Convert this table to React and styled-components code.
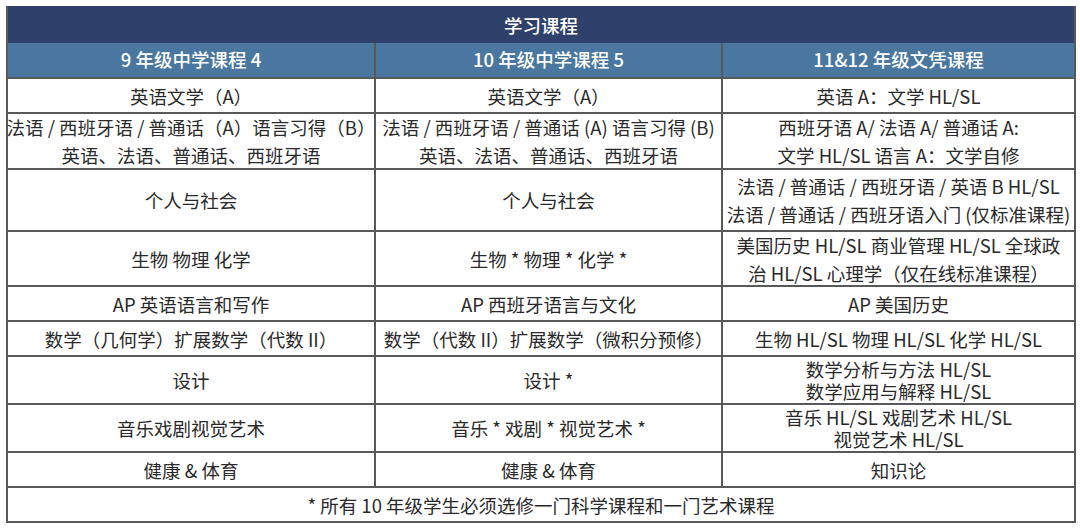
import React from 'react'
import styled, {createGlobalStyle} from 'styled-components'

const FONT = '"Noto Sans CJK SC", "Noto Sans", sans-serif'
const LINE = '#58595b'

const GlobalStyle = createGlobalStyle`
  html, body {
    margin: 0;
    padding: 0;
    background: #ffffff;
  }
  body {
    font-family: ${FONT};
  }
`

const Page = styled.div`
  padding: 6px 0 0 6px;
`

const Table = styled.div`
  width: 1066px;
  border: 2px solid ${LINE};
  border-top: none;
  background: ${LINE};
`

const Title = styled.div`
  height: 37px;
  display: flex;
  align-items: center;
  justify-content: center;
  background: #2f416a;
  color: #ffffff;
  font-size: 18.5px;
  font-weight: 500;
`

const Grid = styled.div`
  display: grid;
  grid-template-columns: 366px 345px 351px;
  grid-template-rows: 34px 33px 54px 60px 53px 33px 33px 46px 46px 33px 33px;
  gap: 2px;
`

const HeadCell = styled.div`
  display: flex;
  align-items: center;
  justify-content: center;
  background: #4a779f;
  color: #ffffff;
  font-size: 18.5px;
  font-weight: 500;
  padding-bottom: 2px;
`

const Cell = styled.div`
  display: flex;
  flex-direction: column;
  align-items: center;
  justify-content: center;
  background: #ffffff;
  color: #2a2a2a;
  font-size: 18.5px;
  line-height: ${p => (p.$tight ? '22px' : '28px')};
  text-align: center;
  white-space: nowrap;
  grid-column: ${p => (p.$span ? '1 / -1' : 'auto')};
`

const heads = ['9 年级中学课程 4', '10 年级中学课程 5', '11&12 年级文凭课程']

const rows = [
  [['英语文学（A）'], ['英语文学（A）'], ['英语 A：文学 HL/SL']],
  [
    ['法语 / 西班牙语 / 普通话（A）语言习得（B）', '英语、法语、普通话、西班牙语'],
    ['法语 / 西班牙语 / 普通话 (A) 语言习得 (B)', '英语、法语、普通话、西班牙语'],
    ['西班牙语 A/ 法语 A/ 普通话 A:', '文学 HL/SL 语言 A：文学自修'],
  ],
  [
    ['个人与社会'],
    ['个人与社会'],
    ['法语 / 普通话 / 西班牙语 / 英语 B HL/SL', '法语 / 普通话 / 西班牙语入门 (仅标准课程)'],
  ],
  [
    ['生物 物理 化学'],
    ['生物 * 物理 * 化学 *'],
    ['美国历史 HL/SL 商业管理 HL/SL 全球政', '治 HL/SL 心理学（仅在线标准课程）'],
  ],
  [['AP 英语语言和写作'], ['AP 西班牙语言与文化'], ['AP 美国历史']],
  [
    ['数学（几何学）扩展数学（代数 II）'],
    ['数学（代数 II）扩展数学（微积分预修）'],
    ['生物 HL/SL 物理 HL/SL 化学 HL/SL'],
  ],
  [['设计'], ['设计 *'], ['数学分析与方法 HL/SL', '数学应用与解释 HL/SL']],
  [['音乐戏剧视觉艺术'], ['音乐 * 戏剧 * 视觉艺术 *'], ['音乐 HL/SL 戏剧艺术 HL/SL', '视觉艺术 HL/SL']],
  [['健康 & 体育'], ['健康 & 体育'], ['知识论']],
]

const tightRows = [6, 7]

export default function App() {
  return (
    <Page>
      <GlobalStyle />
      <Table>
        <Title>学习课程</Title>
        <Grid>
          {heads.map(h => (
            <HeadCell key={h}>{h}</HeadCell>
          ))}
          {rows.map((row, r) =>
            row.map((lines, c) => (
              <Cell key={`${r}-${c}`} $tight={tightRows.includes(r)}>
                {lines.map(l => (
                  <span key={l}>{l}</span>
                ))}
              </Cell>
            ))
          )}
          <Cell $span>* 所有 10 年级学生必须选修一门科学课程和一门艺术课程</Cell>
        </Grid>
      </Table>
    </Page>
  )
}
